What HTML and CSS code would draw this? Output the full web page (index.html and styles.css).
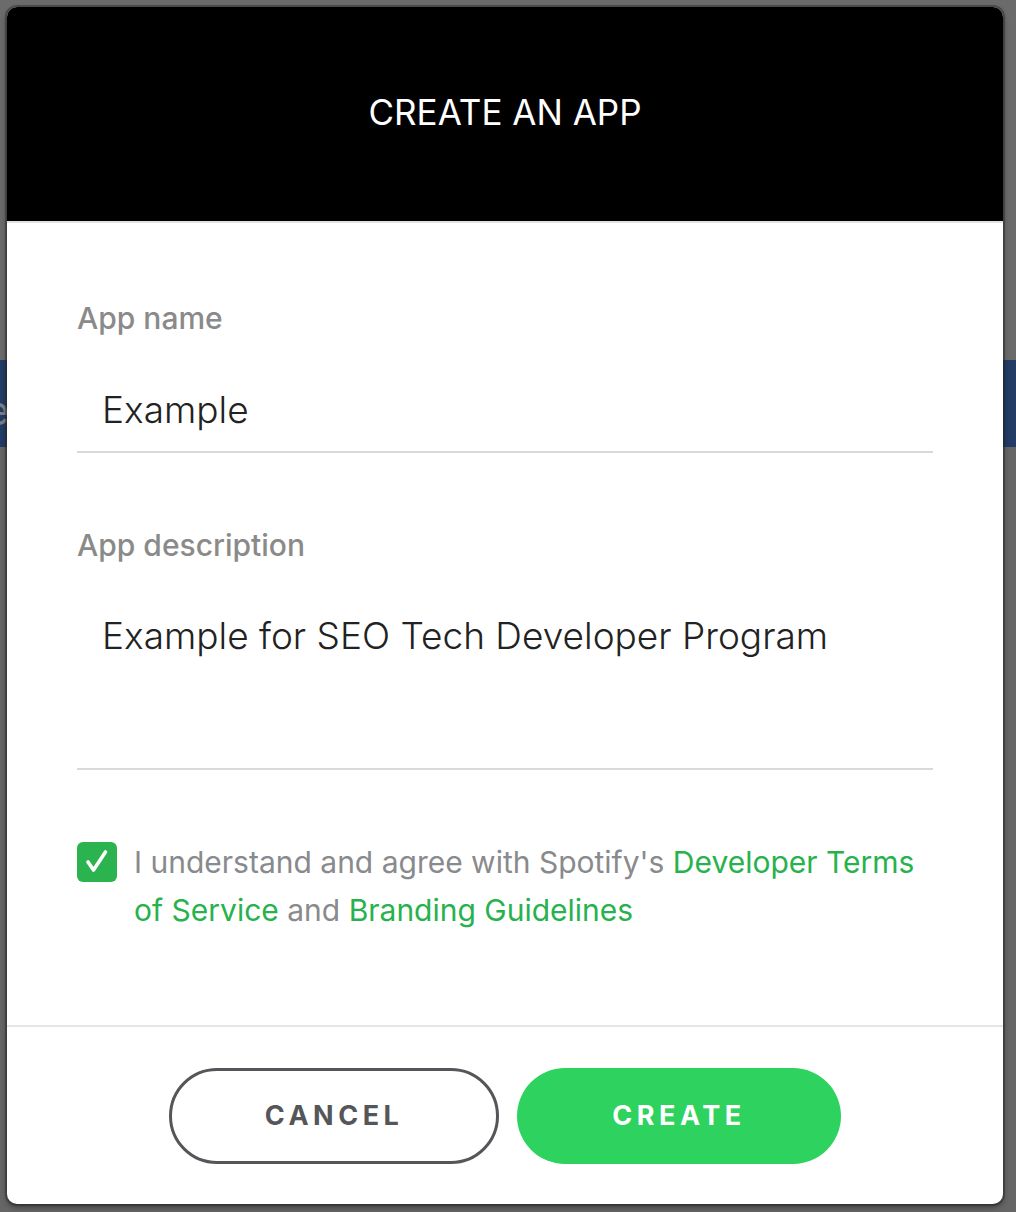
FILE: index.html
```html
<!DOCTYPE html>
<html>
<head>
<meta charset="utf-8">
<link rel="stylesheet" href="styles.css">
</head>
<body>
<div class="page">
  <div class="page-top"></div>
  <div class="page-band"><span class="band-text">e</span></div>
</div>
<div class="modal">
  <div class="modal-header"><h1 class="modal-title">CREATE AN APP</h1></div>
  <div class="modal-body">
    <div class="field">
      <label class="field-label">App name</label>
      <div class="field-input">Example</div>
    </div>
    <div class="field">
      <label class="field-label">App description</label>
      <div class="field-input field-textarea">Example for SEO Tech Developer Program</div>
    </div>
    <div class="agree">
      <span class="checkbox"><svg width="40" height="40" viewBox="0 0 40 40"><path d="M11 20 L16.5 28 L28.5 10" fill="none" stroke="#fff" stroke-width="3.6" stroke-linecap="round" stroke-linejoin="round"/></svg></span>
      <p class="agree-text">I understand and agree with Spotify's <a class="link">Developer Terms of Service</a> and <a class="link">Branding Guidelines</a></p>
    </div>
  </div>
  <div class="modal-footer">
    <button class="btn btn-cancel">CANCEL</button>
    <button class="btn btn-create">CREATE</button>
  </div>
</div>
</body>
</html>
```
FILE: styles.css
```css
html, body {
  margin: 0;
  padding: 0;
}
body {
  width: 1016px;
  height: 1212px;
  overflow: hidden;
  background: #5a5a5a;
  font-family: Inter, "Noto Sans", sans-serif;
  position: relative;
}
.page {
  display: flex;
  flex-direction: column;
}
.page-top {
  height: 360px;
  background: #6b6b6b;
}
.page-band {
  height: 87px;
  background: #223c66;
  position: relative;
}
.band-text {
  position: absolute;
  left: -14px;
  top: 26px;
  font-size: 40px;
  color: #7a7f88;
}
.page::after {
  content: "";
  display: block;
  height: 765px;
  background: #666;
}
.modal {
  position: absolute;
  left: 7px;
  top: 7px;
  width: 996px;
  height: 1197px;
  background: #fff;
  border-radius: 10px;
  overflow: hidden;
  box-shadow: 0 0 0 2px rgba(40,40,40,0.45), 0 3px 6px rgba(0,0,0,0.45);
  display: flex;
  flex-direction: column;
}
.modal-header {
  height: 210px;
  padding-bottom: 4px;
  background: #000;
  border-bottom: 2px solid #e2e2e2;
  display: flex;
  align-items: center;
  justify-content: center;
  flex-shrink: 0;
}
.modal-title {
  margin: 0;
  color: #fff;
  font-size: 35px;
  font-weight: 400;
}
.modal-body {
  padding: 77px 70px 0 70px;
  flex: 1;
}
.field {
  display: flex;
  flex-direction: column;
}
.field + .field {
  margin-top: 74px;
}
.field-label {
  font-size: 30px;
  color: #8a8a8a;
  line-height: 36px;
  font-weight: 500;
}
.field-input {
  font-size: 37px;
  color: #222;
  padding: 52px 25px 19px;
  line-height: 44px;
  border-bottom: 2px solid #d9d9d9;
  font-weight: 300;
}
.field-textarea {
  padding-top: 51px;
  padding-bottom: 0;
  height: 154px;
  box-sizing: content-box;
}
.agree {
  display: flex;
  gap: 17px;
  align-items: flex-start;
  margin-top: 68px;
}
.checkbox {
  width: 40px;
  height: 40px;
  border-radius: 6px;
  background: #2bb34f;
  flex-shrink: 0;
  margin-top: 4px;
  display: flex;
}
.agree-text {
  margin: 0;
  font-size: 30px;
  line-height: 48px;
  color: #888a8d;
}
.link {
  color: #27b24d;
}
.modal-footer {
  height: 177px;
  border-top: 2px solid #e5e5e5;
  display: flex;
  justify-content: center;
  align-items: center;
  gap: 18px;
  flex-shrink: 0;
}
.btn {
  height: 96px;
  border-radius: 48px;
  font-family: Inter, "Noto Sans", sans-serif;
  font-size: 27px;
  font-weight: 700;
  letter-spacing: 4.5px;
  cursor: pointer;
}
.btn-cancel {
  width: 330px;
  background: #fff;
  border: 3px solid #545659;
  color: #545659;
}
.btn-create {
  width: 324px;
  background: #2dd35e;
  border: none;
  color: #fff;
}
```
